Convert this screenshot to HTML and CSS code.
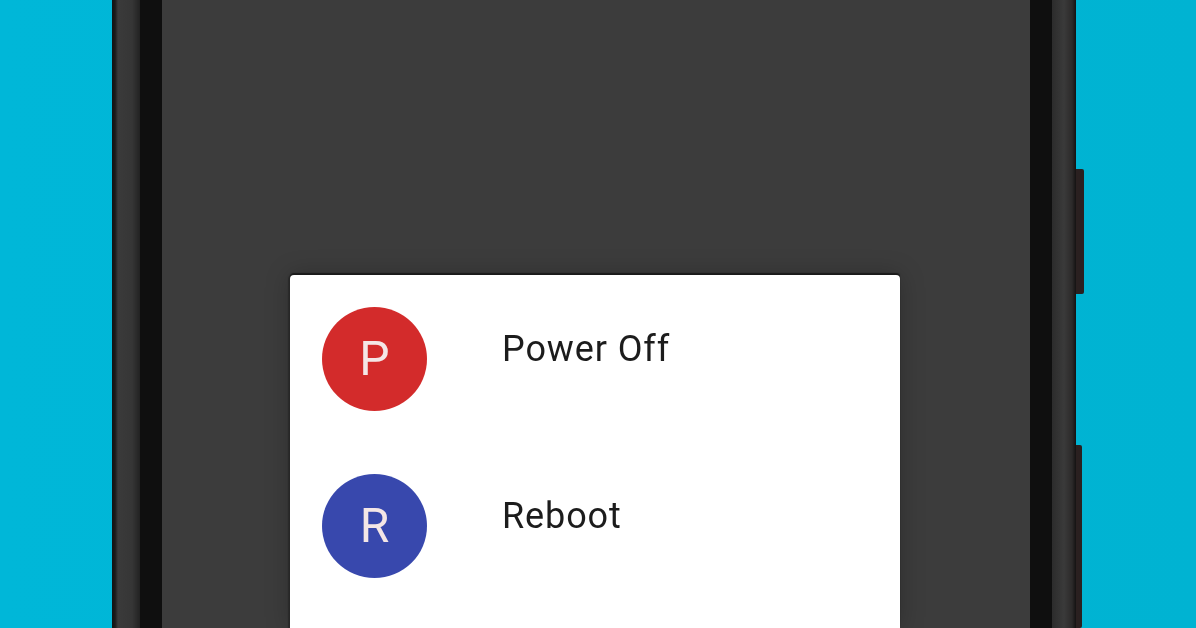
FILE: index.html
```html
<!DOCTYPE html>
<html lang="en">
<head>
    <meta charset="UTF-8">
    <title>Power Menu</title>
    <link rel="stylesheet" href="styles.css">
</head>
<body>
    <div class="phone">
        <div class="sideButton powerKey"></div>
        <div class="sideButton volumeKey"></div>
        <div class="bezel">
            <div class="screen">
                <div class="dialog">
                    <div class="menuItem">
                        <div class="avatar red">P</div>
                        <div class="label">Power Off</div>
                    </div>
                    <div class="menuItem">
                        <div class="avatar blue">R</div>
                        <div class="label">Reboot</div>
                    </div>
                </div>
            </div>
        </div>
    </div>
</body>
</html>
```

FILE: styles.css
```css
html, body {
    height: 100%;
}
body {
    margin: 0;
    overflow: hidden;
    background: linear-gradient(to right, #00b7d8 0, #00b3d2 100%);
    font-family: Roboto, "Liberation Sans", sans-serif;
    padding-left: 112px;
}
/* the source picture is a soft upscale, so everything gets a slight blur */
.phone {
    position: relative;
    width: 964px;
    height: 628px;
    box-sizing: border-box;
    padding: 0 24px 0 28px;
    background: linear-gradient(to right, #101414 0, #1a1a1a 3px, #3a3a3a 6px, #363636 20px, #222 28px, #2c2c2c calc(100% - 24px), #3a3a3a calc(100% - 12px), #2c2a2a calc(100% - 4px), #141212 100%);
    filter: blur(0.6px);
}
.sideButton {
    position: absolute;
    right: -8px;
    width: 8px;
    background: #2a2020;
    border-radius: 0 2px 2px 0;
}
.powerKey {
    top: 169px;
    height: 125px;
}
.volumeKey {
    top: 445px;
    width: 6px;
    right: -6px;
    height: 183px;
}
.bezel {
    height: 100%;
    padding: 0 22px;
    background: #0f0f0f;
}
.screen {
    height: 100%;
    box-sizing: border-box;
    padding: 275px 130px 0 128px;
    background: #3c3c3c;
}
.dialog {
    height: 100%;
    box-sizing: border-box;
    padding-top: 32px;
    background: #fff;
    border-radius: 4px 4px 0 0;
    box-shadow: 0 -2px 1px #1a1a1a, -2px 0 1px #2a2a2a, 0 0 24px rgba(0, 0, 0, 0.25);
}
.menuItem {
    display: flex;
    align-items: flex-start;
    height: 167px;
    padding-left: 32px;
}
.avatar {
    display: flex;
    align-items: center;
    justify-content: center;
    flex: none;
    width: 105px;
    height: 104px;
    border-radius: 50%;
    color: #f4e6e6;
    font-size: 48px;
    line-height: 100px;
}
.red {
    background: #d32b2b;
}
.blue {
    background: #3848ad;
}
.label {
    margin: 20px 0 0 75px;
    color: #1c1c1c;
    font-size: 36px;
    letter-spacing: 0.9px;
    line-height: 44px;
}
```
